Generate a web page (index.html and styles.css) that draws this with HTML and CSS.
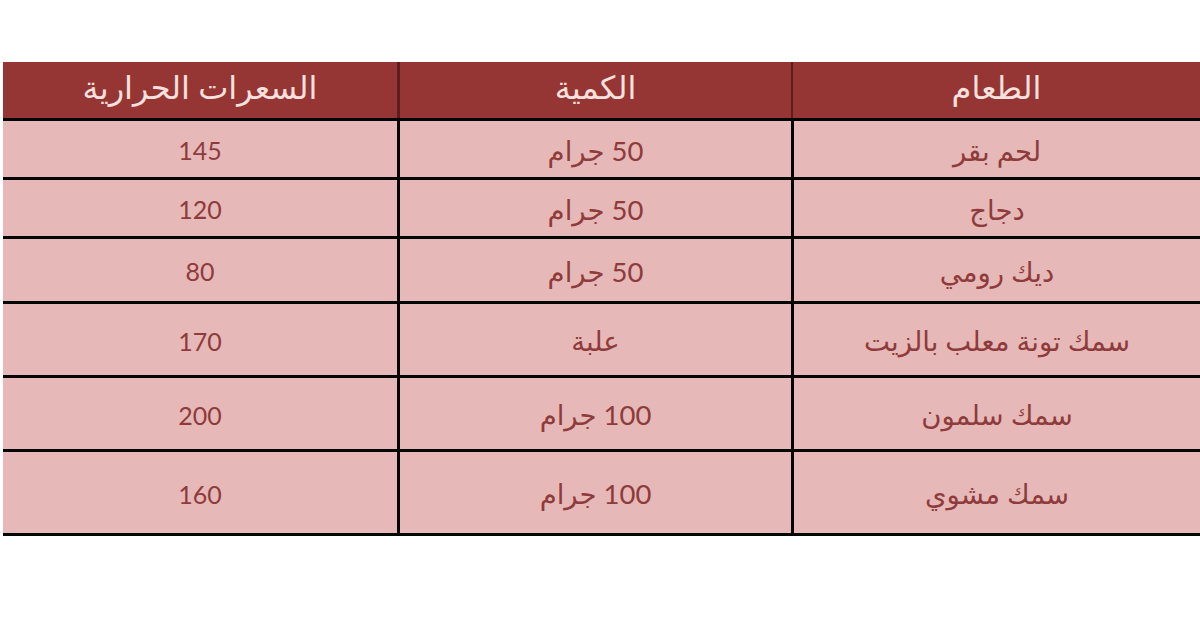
FILE: index.html
```html
<!DOCTYPE html>
<html lang="ar" dir="rtl">
<head>
<meta charset="utf-8">
<title>السعرات الحرارية</title>
<link rel="stylesheet" href="styles.css">
</head>
<body>
<main class="page">
  <div class="table">
    <div class="row head">
      <div class="cell c-food">الطعام</div>
      <div class="cell c-qty">الكمية</div>
      <div class="cell c-cal">السعرات الحرارية</div>
    </div>
    <div class="row r1">
      <div class="cell c-food">لحم بقر</div>
      <div class="cell c-qty">50 جرام</div>
      <div class="cell c-cal num">145</div>
    </div>
    <div class="row r2">
      <div class="cell c-food">دجاج</div>
      <div class="cell c-qty">50 جرام</div>
      <div class="cell c-cal num">120</div>
    </div>
    <div class="row r3">
      <div class="cell c-food">ديك رومي</div>
      <div class="cell c-qty">50 جرام</div>
      <div class="cell c-cal num">80</div>
    </div>
    <div class="row r4">
      <div class="cell c-food">سمك تونة معلب بالزيت</div>
      <div class="cell c-qty">علبة</div>
      <div class="cell c-cal num">170</div>
    </div>
    <div class="row r5">
      <div class="cell c-food">سمك سلمون</div>
      <div class="cell c-qty">100 جرام</div>
      <div class="cell c-cal num">200</div>
    </div>
    <div class="row r6">
      <div class="cell c-food">سمك مشوي</div>
      <div class="cell c-qty">100 جرام</div>
      <div class="cell c-cal num">160</div>
    </div>
  </div>
</main>
</body>
</html>
```

FILE: styles.css
```css
html, body {
  margin: 0;
  padding: 0;
  background: #ffffff;
}

.page {
  width: 1200px;
  height: 630px;
  padding-top: 62px;
  padding-left: 1px;
  box-sizing: border-box;
  direction: rtl;
}

.table {
  width: 1197px;
  display: flex;
  flex-direction: column;
  font-family: Lato, "DejaVu Sans", sans-serif;
}

.row {
  display: grid;
  grid-template-columns: 409px 394px 394px;
  border-bottom: 3px solid #050505;
  box-sizing: border-box;
}

.cell {
  display: flex;
  align-items: center;
  justify-content: center;
  background: #e6b8b7;
  color: #8e3b3b;
  font-size: 27.5px;
  border-left: 3px solid #050505;
  padding-top: 2px;
  box-sizing: border-box;
}

.cell.num {
  font-size: 25px;
}

.cell.c-cal {
  border-left: none;
}

.head .cell {
  background: #963634;
  color: #f6e1df;
  font-size: 32px;
  border-left: 2px solid #5c1e1d;
  padding-top: 0;
  padding-bottom: 6px;
}

.head .cell.c-qty {
  border-left: 3px solid #5c1e1d;
}

.head .cell.c-cal {
  border-left: none;
}

.head { height: 59px; }
.r1 { height: 59px; }
.r2 { height: 59px; }
.r3 { height: 65px; }
.r4 { height: 74px; }
.r5 { height: 74px; }
.r6 { height: 84px; }
```
